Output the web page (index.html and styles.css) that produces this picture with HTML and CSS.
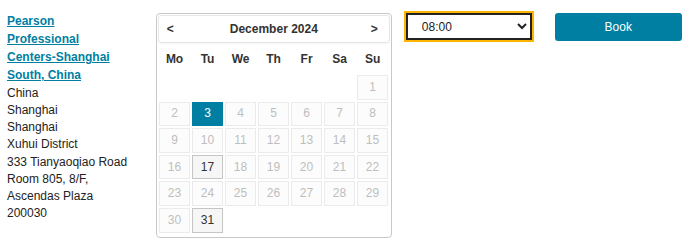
FILE: index.html
```
<!DOCTYPE html>
<html>
<head>
<meta charset="utf-8">
<link rel="stylesheet" href="styles.css">
</head>
<body>
<div class="page">
  <div class="address">
    <a class="name" href="#">Pearson Professional Centers-Shanghai South, China</a>
    <div>China</div>
    <div>Shanghai</div>
    <div>Shanghai</div>
    <div>Xuhui District</div>
    <div>333 Tianyaoqiao Road</div>
    <div>Room 805, 8/F, Ascendas Plaza</div>
    <div>200030</div>
  </div>
  <div class="cal">
    <div class="cal-head">
      <span class="prev">&lt;</span>
      <span class="title">December 2024</span>
      <span class="next">&gt;</span>
    </div>
    <div class="week">
      <span>Mo</span><span>Tu</span><span>We</span><span>Th</span><span>Fr</span><span>Sa</span><span>Su</span>
    </div>
    <div class="days">
      <span class="empty"></span><span class="empty"></span><span class="empty"></span><span class="empty"></span><span class="empty"></span><span class="empty"></span>
      <span class="day off">1</span>
      <span class="day off">2</span><span class="day active">3</span><span class="day off">4</span><span class="day off">5</span><span class="day off">6</span><span class="day off">7</span><span class="day off">8</span>
      <span class="day off">9</span><span class="day off">10</span><span class="day off">11</span><span class="day off">12</span><span class="day off">13</span><span class="day off">14</span><span class="day off">15</span>
      <span class="day off">16</span><span class="day">17</span><span class="day off">18</span><span class="day off">19</span><span class="day off">20</span><span class="day off">21</span><span class="day off">22</span>
      <span class="day off">23</span><span class="day off">24</span><span class="day off">25</span><span class="day off">26</span><span class="day off">27</span><span class="day off">28</span><span class="day off">29</span>
      <span class="day off">30</span><span class="day">31</span>
    </div>
  </div>
  <select class="time">
    <option>08:00</option>
  </select>
  <button class="book" type="button">Book</button>
</div>
</body>
</html>
```
FILE: styles.css
```
html, body {
  margin: 0;
  padding: 0;
  background: #fff;
}

.page {
  display: flex;
  align-items: flex-start;
  padding: 11px 0 0 7px;
  font: 12px/1.42857 "Liberation Sans", Arial, sans-serif;
  color: #222;
}

.address {
  width: 121.8px;
  flex: none;
  margin-top: 1px;
}

.name {
  display: block;
  font-weight: bold;
  color: #007fa3;
  line-height: 18px;
  margin-bottom: 1px;
  text-decoration: underline;
}

.cal {
  flex: none;
  margin: 2px 0 0 27px;
  width: 236px;
  box-sizing: border-box;
  border: 1px solid #c8c8c8;
  border-radius: 4px;
  padding: 1px 1px 4px 1px;
}

.cal-head {
  display: grid;
  grid-template-columns: 1fr auto 1fr;
  align-items: center;
  height: 28px;
  box-sizing: border-box;
  padding-top: 2px;
  border: 1px solid #e6e6e6;
  border-radius: 3px;
  box-shadow: 0 1px 1px rgba(0, 0, 0, 0.04);
  font-weight: bold;
  color: #333;
}

.prev {
  justify-self: start;
  padding-left: 8px;
}

.next {
  justify-self: end;
  padding-right: 11px;
}

.week,
.days {
  display: grid;
  grid-template-columns: repeat(7, 31.5px);
  column-gap: 1.5px;
  margin-left: 1px;
}

.week {
  height: 32px;
  box-sizing: border-box;
  padding-top: 2px;
  align-items: center;
  font-weight: bold;
  color: #333;
  text-align: center;
}

.days {
  grid-auto-rows: 24.6px;
  row-gap: 2px;
}

.day {
  display: flex;
  align-items: center;
  justify-content: center;
  box-sizing: border-box;
  border: 1px solid #c5c5c5;
  background: #f6f6f6;
  color: #333;
}

.day.off {
  border-color: #ebebeb;
  background: #fcfcfc;
  color: #bebebe;
}

.day.active {
  border-color: #007fa3;
  background: #007fa3;
  color: #fff;
}

.time {
  flex: none;
  margin: 2px 0 0 14px;
  width: 126px;
  height: 27px;
  box-sizing: border-box;
  border: 2px solid #222;
  outline: 2px solid #ffb400;
  border-radius: 0;
  padding: 0 0 0 10px;
  background: #fff;
  color: #222;
  font: 12px "Liberation Sans", Arial, sans-serif;
}

.book {
  flex: none;
  margin: 2px 0 0 23px;
  width: 127px;
  height: 28px;
  border: none;
  border-radius: 3px;
  background: #007fa3;
  color: #fff;
  font: 12px "Liberation Sans", Arial, sans-serif;
  padding: 0;
}
```
